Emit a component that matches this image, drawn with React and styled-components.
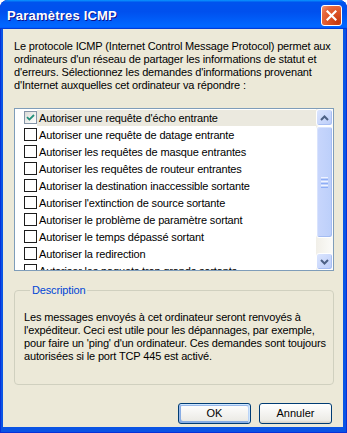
import React from 'react';
import styled, { createGlobalStyle } from 'styled-components';

const Global = createGlobalStyle`
  html, body { margin: 0; padding: 0; background: #ffffff; }
  body { width: 347px; height: 433px; overflow: hidden; }
`;

const Window = styled.div`
  width: 347px;
  height: 433px;
  box-sizing: border-box;
  display: flex;
  flex-direction: column;
  background: #0a54e4;
  border-radius: 8px 8px 0 0;
  box-shadow: inset 1px 0 #0831d9, inset -1px 0 #0831d9, inset 0 -1px #0831d9;
  overflow: hidden;
`;

const TitleBar = styled.div`
  height: 29px;
  flex: none;
  display: flex;
  align-items: center;
  padding: 0 5px 0 7px;
  box-sizing: border-box;
  border-radius: 8px 8px 0 0;
  background: linear-gradient(180deg, #0997ff, #0053ee 8%, #0050ee 40%, #06f 88%, #06f 93%, #005bff 95%, #003dd7 96%, #003dd7);
`;

const Title = styled.div`
  flex: 1;
  color: #ffffff;
  font-family: "Liberation Sans", Arial, sans-serif;
  font-weight: bold;
  font-size: 13px;
  letter-spacing: 0.2px;
  text-shadow: 1px 1px #0f1089;
  padding-top: 1px;
`;

const CloseButton = styled.div`
  width: 21px;
  height: 21px;
  box-sizing: border-box;
  border: 1px solid #ffffff;
  border-radius: 3px;
  background: radial-gradient(circle at 85% 85%, #c7390e 0%, #dd5426 45%, #e66a40 75%, #f39a78 100%);
  display: flex;
  align-items: center;
  justify-content: center;
  margin-top: 2px;
`;

const Client = styled.div`
  flex: 1;
  margin: 0 4px 6px 3px;
  background: #ece9d8;
  display: flex;
  flex-direction: column;
  padding: 11px 9px 0 11px;
  font-family: "Liberation Sans", Arial, sans-serif;
  font-size: 11px;
  line-height: 13px;
  color: #000000;
`;

const Intro = styled.p`
  margin: 0;
  white-space: nowrap;
  letter-spacing: -0.15px;
`;

const ListBox = styled.div`
  margin-top: 16px;
  height: 163px;
  box-sizing: border-box;
  border: 1px solid #7f9db9;
  background: #ffffff;
  display: flex;
  overflow: hidden;
`;

const Items = styled.div`
  flex: 1;
  overflow: hidden;
`;

const Row = styled.div`
  height: 17px;
  display: flex;
  align-items: center;
  padding-left: 9px;
  white-space: nowrap;
`;

const Box = styled.span`
  width: 13px;
  height: 13px;
  flex: none;
  box-sizing: border-box;
  border: 1px solid ${p => (p.$checked ? '#8595a8' : '#1c1c1c')};
  background: ${p => (p.$checked ? 'linear-gradient(135deg, #dcdcd7, #ffffff)' : '#ffffff')};
  display: flex;
  align-items: center;
  justify-content: center;
`;

const Label = styled.span`
  height: 16px;
  margin-top: 1px;
  display: flex;
  align-items: center;
  flex: 1;
  padding-left: 2px;
  letter-spacing: -0.15px;
  background: ${p => (p.$focused ? '#ebe9df' : 'transparent')};
`;

const ScrollBar = styled.div`
  width: 17px;
  flex: none;
  display: flex;
  flex-direction: column;
  background: linear-gradient(90deg, #f1efe8, #fbfbf9);
`;

const ArrowButton = styled.div`
  height: 17px;
  flex: none;
  box-sizing: border-box;
  border: 1px solid #ffffff;
  border-radius: 3px;
  background: linear-gradient(135deg, #dbe5fe, #bccdf9);
  box-shadow: inset -1px -1px #a9bff3;
  display: flex;
  align-items: center;
  justify-content: center;
`;

const Thumb = styled.div`
  height: 112px;
  flex: none;
  box-sizing: border-box;
  border: 1px solid #ffffff;
  border-radius: 3px;
  background: linear-gradient(90deg, #c8d6fc, #bccffa);
  box-shadow: inset -1px -1px #a4bcf2, inset 1px 1px #d9e3fd;
  display: flex;
  flex-direction: column;
  align-items: center;
  justify-content: center;
  gap: 1px;
`;

const Grip = styled.span`
  width: 7px;
  height: 1px;
  background: ${p => (p.$dark ? '#8eaef6' : '#eef3ff')};
`;

const Track = styled.div`
  flex: 1;
`;

const Group = styled.fieldset`
  margin: 13px 0 0 0;
  padding: 14px 9px 21px 9px;
  border: 1px solid #d0d0bf;
  border-radius: 4px;
  min-width: 0;
`;

const Legend = styled.legend`
  margin-left: 6px;
  padding: 0 2px;
  color: #0046d5;
  line-height: 13px;
  letter-spacing: -0.15px;
`;

const Desc = styled.p`
  margin: 0;
  white-space: nowrap;
  letter-spacing: -0.15px;
`;

const ButtonRow = styled.div`
  margin-top: 18px;
  display: flex;
  justify-content: flex-end;
  gap: 8px;
  padding-right: 2px;
`;

const Button = styled.div`
  width: 73px;
  height: 21px;
  box-sizing: border-box;
  border: 1px solid #003c74;
  border-radius: 3px;
  background: linear-gradient(180deg, #ffffff, #ecebe6 86%, #d6d0c5);
  display: flex;
  align-items: center;
  justify-content: center;
  box-shadow: ${p =>
    p.$default
      ? 'inset -1px 1px #cee7ff, inset 1px 2px #98b8ea, inset -2px 2px #bcd4f6, inset 1px -1px #89ade4, inset 2px -2px #89ade4'
      : 'none'};
`;

const items = [
  "Autoriser une requête d'écho entrante",
  'Autoriser une requête de datage entrante',
  'Autoriser les requêtes de masque entrantes',
  'Autoriser les requêtes de routeur entrantes',
  'Autoriser la destination inaccessible sortante',
  "Autoriser l'extinction de source sortante",
  'Autoriser le problème de paramètre sortant',
  'Autoriser le temps dépassé sortant',
  'Autoriser la redirection',
  'Autoriser les paquets trop grands sortants',
];

const Chevron = ({ up }) => (
  <svg width="9" height="6" viewBox="0 0 9 6">
    <polyline
      points={up ? '1,5 4.5,1.5 8,5' : '1,1 4.5,4.5 8,1'}
      fill="none"
      stroke="#4d6185"
      strokeWidth="2"
    />
  </svg>
);

export default function App() {
  return (
    <>
      <Global />
      <Window>
        <TitleBar>
          <Title>Paramètres ICMP</Title>
          <CloseButton>
            <svg width="11" height="11" viewBox="0 0 11 11">
              <path d="M1.5 1.5 L9.5 9.5 M9.5 1.5 L1.5 9.5" stroke="#ffffff" strokeWidth="2.2" strokeLinecap="square" />
            </svg>
          </CloseButton>
        </TitleBar>
        <Client>
          <Intro>
            Le protocole ICMP (Internet Control Message Protocol) permet aux
            <br />
            ordinateurs d'un réseau de partager les informations de statut et
            <br />
            d'erreurs. Sélectionnez les demandes d'informations provenant
            <br />
            d'Internet auxquelles cet ordinateur va répondre :
          </Intro>
          <ListBox>
            <Items>
              {items.map((t, i) => (
                <Row key={t}>
                  <Box $checked={i === 0}>
                    {i === 0 && (
                      <svg width="9" height="9" viewBox="0 0 9 9">
                        <path d="M1 4.2 L3.4 6.6 L8 2" fill="none" stroke="#21907a" strokeWidth="1.8" />
                      </svg>
                    )}
                  </Box>
                  <Label $focused={i === 0}>{t}</Label>
                </Row>
              ))}
            </Items>
            <ScrollBar>
              <ArrowButton>
                <Chevron up />
              </ArrowButton>
              <Thumb>
                <Grip />
                <Grip $dark />
                <Grip />
                <Grip $dark />
                <Grip />
                <Grip $dark />
              </Thumb>
              <Track />
              <ArrowButton>
                <Chevron />
              </ArrowButton>
            </ScrollBar>
          </ListBox>
          <Group>
            <Legend>Description</Legend>
            <Desc>
              Les messages envoyés à cet ordinateur seront renvoyés à
              <br />
              l'expéditeur. Ceci est utile pour les dépannages, par exemple,
              <br />
              pour faire un 'ping' d'un ordinateur. Ces demandes sont toujours
              <br />
              autorisées si le port TCP 445 est activé.
            </Desc>
          </Group>
          <ButtonRow>
            <Button $default>OK</Button>
            <Button>Annuler</Button>
          </ButtonRow>
        </Client>
      </Window>
    </>
  );
}
